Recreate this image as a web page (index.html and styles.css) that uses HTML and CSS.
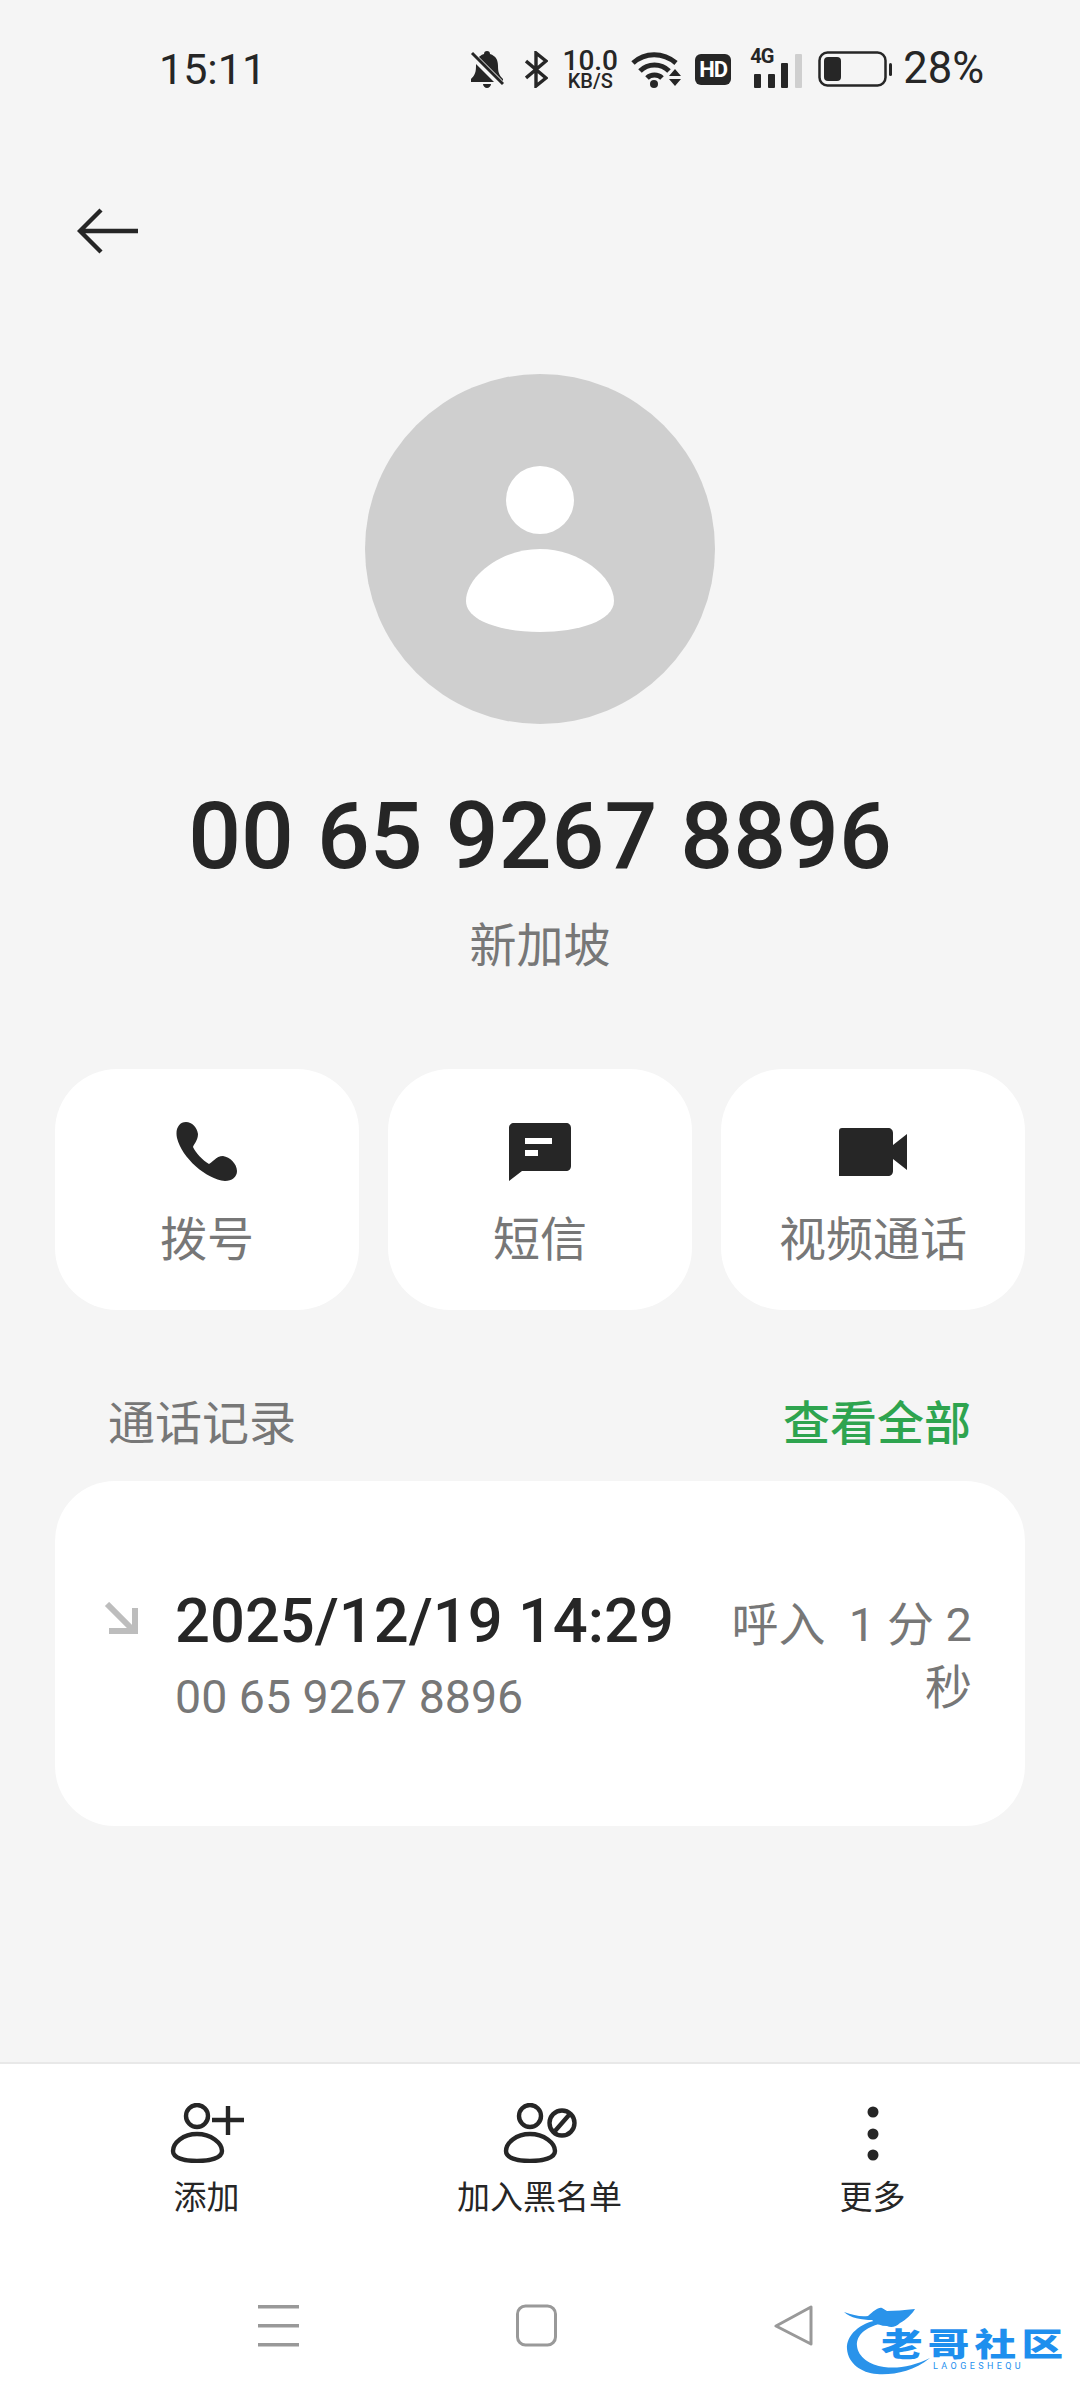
FILE: index.html
```html
<!DOCTYPE html>
<html>
  <head>
    <title>Contact</title>
    <link rel="stylesheet" href="styles.css">
  </head>
  <body>
    <div id="page">
      <div id="status-bar">
        <span class="time">15:11</span>
        <div class="status-icons">
          <svg class="ic-bell" width="34" height="37" viewBox="0 0 34 37">
            <path d="M17 0c2 0 3 1 3 3 6 2 8 6 8 12 0 6 1 9 5 13v3H1v-3c4-4 5-7 5-13 0-6 2-10 8-12 0-2 1-3 3-3zM13 33h8c0 2-2 4-4 4s-4-2-4-4z" fill="#262626"/>
            <path d="M1 3l31 31" stroke="#f5f5f5" stroke-width="7"/>
            <path d="M2 2l31 31" stroke="#262626" stroke-width="3"/>
          </svg>
          <svg class="ic-bt" width="23" height="37" viewBox="0 0 23 37" fill="none" stroke="#262626" stroke-width="3.4">
            <path d="M1 10l20 17-10 8V2l10 8L1 27"/>
          </svg>
          <div class="speed"><span class="speed-num">10.0</span><span class="speed-unit">KB/S</span></div>
          <svg class="ic-wifi" width="50" height="38" viewBox="0 0 50 38" fill="none">
            <path d="M2 13c12-11 30-11 43 0M9 21c8-8 21-8 29 0M16 28c4-4 11-4 15 0" stroke="#262626" stroke-width="5"/>
            <circle cx="23" cy="34" r="4" fill="#262626"/>
            <path d="M44 19l6 7H38zM38 29h12l-6 7z" fill="#262626"/>
          </svg>
          <div class="hd">HD</div>
          <div class="signal">
            <span class="signal-tag">4G</span>
            <svg width="52" height="37" viewBox="0 0 52 37">
              <rect x="4" y="23" width="7" height="14" rx="1" fill="#262626"/>
              <rect x="18" y="23" width="7" height="14" rx="1" fill="#262626"/>
              <rect x="31" y="12" width="7" height="25" rx="1" fill="#262626"/>
              <rect x="45" y="3" width="7" height="34" rx="1" fill="#cfcfcf"/>
            </svg>
          </div>
          <svg class="ic-batt" width="74" height="36" viewBox="0 0 74 36" fill="none">
            <rect x="1.5" y="1.5" width="66" height="33" rx="8" stroke="#262626" stroke-width="2.5"/>
            <rect x="6" y="6" width="17" height="24" rx="4" fill="#262626"/>
            <rect x="71" y="12" width="3" height="13" rx="1.5" fill="#262626"/>
          </svg>
          <span class="batt-text">28%</span>
        </div>
      </div>

      <div id="top-nav">
        <svg width="62" height="46" viewBox="0 0 62 46" fill="none" stroke="#262626" stroke-width="4.4">
          <path d="M61 23H3M24 2L3 23l21 21"/>
        </svg>
      </div>

      <div class="avatar">
        <span class="avatar-head"></span>
        <svg class="avatar-body" width="148" height="83" viewBox="0 0 148 83">
          <path d="M74 0c40 0 74 28 74 52 0 20-36 31-74 31S0 72 0 52C0 28 34 0 74 0z" fill="#fff"/>
        </svg>
      </div>

      <h1 class="number">00 65 9267 8896</h1>
      <div class="region">新加坡</div>

      <div id="actions">
        <div class="action">
          <svg width="62" height="62" viewBox="0 0 62 62">
            <path d="M10 1C16 1 21 6 22 13C22 19 18 23 17 26C19 31 27 40 33 43C36 42 40 35 47 35C54 36 61 43 61 50C61 56 56 60 49 60C30 58 6 37 1 17C-1 8 3 1 10 1z" fill="#262626"/>
          </svg>
          <span>拨号</span>
        </div>
        <div class="action">
          <svg width="62" height="58" viewBox="0 0 62 58">
            <path d="M5 0h52c3 0 5 2 5 5v38c0 3-2 5-5 5H13L0 58V5c0-3 2-5 5-5z" fill="#262626"/>
            <rect x="16" y="15" width="27" height="6" fill="#fff"/>
            <rect x="16" y="27" width="13" height="6" fill="#fff"/>
          </svg>
          <span>短信</span>
        </div>
        <div class="action">
          <svg width="68" height="48" viewBox="0 0 68 48">
            <path d="M3 0h46c3 0 5 2 5 5v38c0 3-2 5-5 5H0V3c0-2 1-3 3-3zM54 17l14-11v36L54 31z" fill="#262626"/>
          </svg>
          <span>视频通话</span>
        </div>
      </div>

      <div class="section-head">
        <span>通话记录</span>
        <span class="see-all">查看全部</span>
      </div>

      <div class="call-card">
        <svg class="call-arrow" width="35" height="33" viewBox="0 0 35 33" fill="none" stroke="#bdbdbd" stroke-width="6">
          <path d="M3 2l27 27M5 29h26V6"/>
        </svg>
        <div class="call-info">
          <div class="call-time">2025/12/19 14:29</div>
          <div class="call-number">00 65 9267 8896</div>
        </div>
        <div class="call-meta">呼入&nbsp;&nbsp;1 分 2<br>秒</div>
      </div>

      <div id="bottom">
        <div id="toolbar">
          <div class="tool">
            <svg width="74" height="60" viewBox="0 0 74 60" fill="none" stroke="#262626" stroke-width="4.4">
              <circle cx="27" cy="13" r="11"/>
              <path d="M27 31c14 0 25 9 25 17 0 7-12 10-25 10S3 55 3 48c0-8 10-17 24-17z"/>
              <path d="M42 17h32M58 3v29"/>
            </svg>
            <span>添加</span>
          </div>
          <div class="tool">
            <svg width="74" height="60" viewBox="0 0 74 60" fill="none" stroke="#262626" stroke-width="4.4">
              <circle cx="27" cy="13" r="11"/>
              <path d="M27 31c14 0 25 9 25 17 0 7-12 10-25 10S3 55 3 48c0-8 10-17 24-17z"/>
              <circle cx="59" cy="20" r="12.5"/>
              <path d="M52 28l14-16"/>
            </svg>
            <span>加入黑名单</span>
          </div>
          <div class="tool">
            <svg width="74" height="60" viewBox="0 0 74 60" fill="#262626">
              <circle cx="37" cy="9" r="5.5"/>
              <circle cx="37" cy="31" r="5.5"/>
              <circle cx="37" cy="52" r="5.5"/>
            </svg>
            <span>更多</span>
          </div>
        </div>
        <div id="nav-bar">
          <svg width="41" height="44" viewBox="0 0 41 44" fill="#999">
            <rect y="1" width="41" height="3.5"/>
            <rect y="20" width="41" height="3.5"/>
            <rect y="39" width="41" height="3.5"/>
          </svg>
          <svg width="41" height="44" viewBox="0 0 41 44" fill="none" stroke="#999" stroke-width="3">
            <rect x="1.5" y="2" width="38" height="39" rx="8"/>
          </svg>
          <svg width="40" height="44" viewBox="0 0 40 44" fill="none" stroke="#999" stroke-width="3" stroke-linejoin="round">
            <path d="M37 3v37L2 22z"/>
          </svg>
        </div>
        <div class="watermark">
          <svg width="100" height="70" viewBox="0 0 100 70">
            <path d="M34 13C16 16 2 28 3 42c1 14 14 24 30 25 16 1 36-2 53-16-16 8-32 11-46 9C26 58 14 50 13 39 12 28 22 20 36 17z" fill="#2a93ea"/>
            <path d="M0 5c9 3 16 5 24 4C30 4 34 0 38 1l5 3c8 0 17-1 28-2-3 5-9 11-15 14-4 4-9 5-13 3-6 0-11-2-15-6C18 13 6 11 0 5z" fill="#2a93ea"/>
          </svg>
          <span class="wm-title">老哥社区</span>
          <span class="wm-sub">LAOGESHEQU</span>
        </div>
      </div>
    </div>
  </body>
</html>
```

FILE: styles.css
```css
* {
  box-sizing: border-box;
}

body {
  margin: 0;
  background-color: #f5f5f5;
  font-family: Roboto, "Noto Sans CJK SC", sans-serif;
  color: #262626;
}

#page {
  display: flex;
  flex-direction: column;
  width: 1080px;
  height: 2400px;
  overflow: hidden;
}

svg {
  display: block;
  flex-shrink: 0;
}

/* status bar */
#status-bar {
  display: flex;
  justify-content: space-between;
  align-items: center;
  height: 38px;
  margin-top: 50px;
  padding: 0 96px 0 159px;
}

.time {
  font-size: 43px;
  line-height: 38px;
}

.status-icons {
  display: flex;
  align-items: center;
}

.ic-bt {
  margin-left: 21px;
}

.speed {
  display: flex;
  flex-direction: column;
  align-items: center;
  width: 56px;
  margin-left: 14px;
  font-weight: 500;
}

.speed-num {
  font-size: 28px;
  line-height: 23px;
}

.speed-unit {
  font-size: 20px;
  line-height: 18px;
}

.ic-wifi {
  margin-left: 13px;
}

.hd {
  width: 36px;
  height: 31px;
  margin-left: 14px;
  border-radius: 6px;
  background-color: #262626;
  color: #fff;
  font-size: 22px;
  font-weight: 700;
  line-height: 31px;
  letter-spacing: -1px;
  text-align: center;
}

.signal {
  position: relative;
  margin-left: 19px;
}

.signal-tag {
  position: absolute;
  top: -5px;
  left: 0;
  font-size: 20px;
  font-weight: 700;
  line-height: 20px;
  letter-spacing: -1px;
}

.ic-batt {
  margin-left: 16px;
}

.batt-text {
  margin-left: 11px;
  font-size: 43.5px;
  line-height: 38px;
}

/* header */
#top-nav {
  margin-top: 120px;
  padding-left: 77px;
}

.avatar {
  display: flex;
  flex-direction: column;
  align-items: center;
  width: 350px;
  height: 350px;
  margin: 120px auto 0;
  padding-top: 92px;
  border-radius: 50%;
  background-color: #cfcfcf;
}

.avatar-head {
  width: 68px;
  height: 68px;
  border-radius: 50%;
  background-color: #fff;
}

.avatar-body {
  margin-top: 15px;
}

.number {
  margin: 63px 0 0;
  font-size: 93px;
  font-weight: 500;
  line-height: 100px;
  text-align: center;
}

.region {
  margin-top: 29px;
  color: #777;
  font-size: 47px;
  line-height: 60px;
  text-align: center;
}

/* call / sms / video buttons */
#actions {
  display: grid;
  grid-template-columns: repeat(3, 304px);
  gap: 29px;
  margin-top: 93px;
  padding: 0 55px;
}

.action {
  display: flex;
  flex-direction: column;
  align-items: center;
  height: 241px;
  padding-top: 52px;
  border-radius: 62px;
  background-color: #fff;
  color: #777;
  font-size: 47px;
}

.action svg {
  height: 62px;
}

.action span {
  margin-top: 24px;
  line-height: 66px;
}

/* call history */
.section-head {
  display: flex;
  justify-content: space-between;
  margin-top: 84px;
  padding: 0 109px 0 108px;
  color: #777;
  font-size: 47px;
  line-height: 60px;
}

.see-all {
  color: #2ea44f;
  font-weight: 500;
}

.call-card {
  display: flex;
  align-items: flex-start;
  height: 345px;
  margin: 27px 55px 0;
  padding: 101px 53px 0 49px;
  border-radius: 60px;
  background-color: #fff;
}

.call-arrow {
  margin-top: 20px;
}

.call-info {
  flex-grow: 1;
  margin-left: 36px;
}

.call-time {
  font-size: 61.5px;
  font-weight: 500;
  line-height: 78px;
}

.call-number {
  color: #777;
  font-size: 46.5px;
  line-height: 75px;
}

.call-meta {
  margin-top: 11px;
  color: #777;
  font-size: 47px;
  line-height: 63px;
  text-align: right;
}

/* bottom toolbar + nav bar */
#bottom {
  position: relative;
  display: flex;
  flex-direction: column;
  height: 338px;
  margin-top: auto;
  border-top: 2px solid #e8e8e8;
  background-color: #fff;
}

#toolbar {
  display: grid;
  grid-template-columns: repeat(3, 333px);
  padding: 39px 41px 0 40px;
}

.tool {
  display: flex;
  flex-direction: column;
  align-items: center;
  font-size: 33px;
}

.tool span {
  margin-top: 13px;
  line-height: 44px;
}

#nav-bar {
  display: flex;
  gap: 217px;
  margin-top: 84px;
  padding-left: 258px;
}

/* site watermark stamped over the nav bar */
.watermark {
  position: absolute;
  top: 243px;
  left: 844px;
  width: 225px;
  height: 70px;
  color: #1e8fee;
}

.wm-title {
  position: absolute;
  top: 10px;
  left: 37px;
  font-size: 40px;
  font-weight: 900;
  line-height: 58px;
  letter-spacing: 5px;
  white-space: nowrap;
  transform: scale(1.04, 0.8);
  transform-origin: left center;
}

.wm-sub {
  position: absolute;
  top: 54px;
  left: 89px;
  font-size: 9px;
  line-height: 10px;
  letter-spacing: 3.4px;
  white-space: nowrap;
}

.watermark svg {
  position: absolute;
  top: 0;
  left: 0;
}
```
